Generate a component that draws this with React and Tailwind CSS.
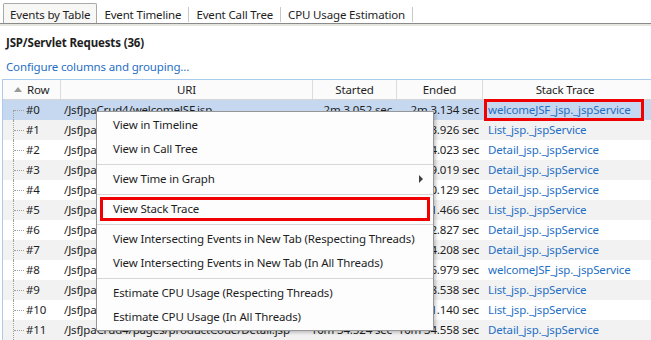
import React from 'react';

const FONT = { fontFamily: '"Noto Sans", "Open Sans", sans-serif' };

const rows = [
  ['/JsfJpaCrud4/welcomeJSF.jsp', '2m 3.052 sec', '2m 3.134 sec', 'welcomeJSF_jsp._jspService'],
  ['/JsfJpaCrud4/pages/productCode/List.jsp', '2m 53.881 sec', '2m 53.926 sec', 'List_jsp._jspService'],
  ['/JsfJpaCrud4/pages/productCode/Detail.jsp', '3m 3.990 sec', '3m 4.023 sec', 'Detail_jsp._jspService'],
  ['/JsfJpaCrud4/pages/productCode/Detail.jsp', '3m 8.987 sec', '3m 9.019 sec', 'Detail_jsp._jspService'],
  ['/JsfJpaCrud4/pages/productCode/Detail.jsp', '3m 30.097 sec', '3m 30.129 sec', 'Detail_jsp._jspService'],
  ['/JsfJpaCrud4/pages/productCode/List.jsp', '4m 11.431 sec', '4m 11.466 sec', 'List_jsp._jspService'],
  ['/JsfJpaCrud4/pages/productCode/Detail.jsp', '4m 22.794 sec', '4m 22.827 sec', 'Detail_jsp._jspService'],
  ['/JsfJpaCrud4/pages/productCode/Detail.jsp', '5m 4.175 sec', '5m 4.208 sec', 'Detail_jsp._jspService'],
  ['/JsfJpaCrud4/welcomeJSF.jsp', '6m 36.937 sec', '6m 36.979 sec', 'welcomeJSF_jsp._jspService'],
  ['/JsfJpaCrud4/pages/productCode/List.jsp', '8m 8.502 sec', '8m 8.538 sec', 'List_jsp._jspService'],
  ['/JsfJpaCrud4/pages/productCode/List.jsp', '9m 51.105 sec', '9m 51.140 sec', 'List_jsp._jspService'],
  ['/JsfJpaCrud4/pages/productCode/Detail.jsp', '10m 34.524 sec', '10m 34.558 sec', 'Detail_jsp._jspService'],
];

const COLS = 'grid grid-cols-[58px_252px_84px_86px_164px]';

function MenuItem({ children, arrow, boxed }) {
  return (
    <div
      className={`h-[24px] flex items-center whitespace-nowrap ${
        boxed ? 'mx-[3px] pl-[10px] pr-[7px] border-[3px] border-[#f00000]' : 'pl-[16px] pr-[10px]'
      }`}
    >
      <span className="flex-1">{children}</span>
      {arrow && (
        <span className="w-0 h-0 border-y-[4px] border-y-transparent border-l-[4px] border-l-[#404040]" />
      )}
    </div>
  );
}

function Sep() {
  return (
    <div className="h-[6px] flex items-center">
      <div className="w-full h-px bg-[#d7d7d7]" />
    </div>
  );
}

export default function App() {
  return (
    <div
      className="relative w-[651px] h-[340px] overflow-hidden bg-white text-[11.5px] tracking-[-0.15px] text-[#1e1e1e]"
      style={FONT}
    >
      {/* tabs */}
      <div className="h-[24px] flex items-end pl-[3px] border-b border-[#8a8a8a]">
        <div className="h-[20px] px-[6px] pt-[2px] flex items-center border border-b-0 border-[#a9a9a9] rounded-t-[2px] bg-[#f7f7f5]">
          Events by Table
        </div>
        {['Event Timeline', 'Event Call Tree', 'CPU Usage Estimation'].map(t => (
          <div key={t} className="h-[20px] pt-[2px] flex items-center pl-[7px]">
            <span className="pr-[7px] border-r border-[#c8c8c8] leading-[15px]">{t}</span>
          </div>
        ))}
      </div>
      <div className="h-[2px] bg-[#e6e6e0]" />

      <div className="pl-[6px] pt-[8px] h-[27px] font-bold">JSP/Servlet Requests (36)</div>
      <div className="pl-[6px] pt-[5px] h-[26px] text-[#1f6fc5]">Configure columns and grouping...</div>

      {/* table */}
      <div className="ml-[2px] border-t border-l border-[#a9cbec]">
        <div className={`${COLS} h-[20px] border-b border-[#d6d6d6] bg-[#fbfbfb]`}>
          <div className="flex items-center pl-[11px] gap-[5px] border-r border-[#dcdcdc]">
            <span className="w-0 h-0 border-x-[4px] border-x-transparent border-b-[5px] border-b-[#9a9a9a]" />
            Row
          </div>
          <div className="flex items-center justify-center border-r border-[#dcdcdc]">URI</div>
          <div className="flex items-center justify-center border-r border-[#dcdcdc]">Started</div>
          <div className="flex items-center justify-center border-r border-[#dcdcdc]">Ended</div>
          <div className="flex items-center justify-center">Stack Trace</div>
        </div>
        {rows.map((r, i) => (
          <div
            key={i}
            className={`${COLS} h-[20px] ${i === 0 ? 'bg-[#c5d8ef]' : i % 2 ? 'bg-[#f2f2f2]' : 'bg-white'}`}
          >
            <div className="relative flex items-center pl-[23px]">
              <span
                className={`absolute left-[10px] w-0 border-l border-dotted border-[#a0a0a0] ${
                  i === 0 ? 'top-[10px] bottom-0' : 'top-0 bottom-0'
                }`}
              />
              <span className="absolute left-[11px] top-[10px] w-[10px] border-t border-dotted border-[#a0a0a0]" />
              #{i}
            </div>
            <div className="flex items-center pl-[3px] whitespace-nowrap overflow-hidden">{r[0]}</div>
            <div className="flex items-center justify-end pr-[5px] whitespace-nowrap overflow-hidden">{r[1]}</div>
            <div className="flex items-center justify-end pr-[4px] whitespace-nowrap overflow-hidden">{r[2]}</div>
            <div className="flex items-center pl-[5px] whitespace-nowrap overflow-hidden text-[#1f6fc5]">{r[3]}</div>
          </div>
        ))}
      </div>

      {/* highlight around stack trace cell */}
      <div className="absolute left-[484px] top-[99px] w-[160px] h-[22px] border-[3px] border-[#f00000]" />

      {/* context menu */}
      <div className="absolute left-[96px] top-[111px] w-[338px] py-[1px] bg-[#fdfdfd] border border-[#979797] shadow-[2px_2px_3px_rgba(0,0,0,0.2)]">
        <MenuItem>View in Timeline</MenuItem>
        <MenuItem>View in Call Tree</MenuItem>
        <Sep />
        <MenuItem arrow>View Time in Graph</MenuItem>
        <Sep />
        <MenuItem boxed>View Stack Trace</MenuItem>
        <Sep />
        <MenuItem>View Intersecting Events in New Tab (Respecting Threads)</MenuItem>
        <MenuItem>View Intersecting Events in New Tab (In All Threads)</MenuItem>
        <Sep />
        <MenuItem>Estimate CPU Usage (Respecting Threads)</MenuItem>
        <MenuItem>Estimate CPU Usage (In All Threads)</MenuItem>
      </div>
    </div>
  );
}
